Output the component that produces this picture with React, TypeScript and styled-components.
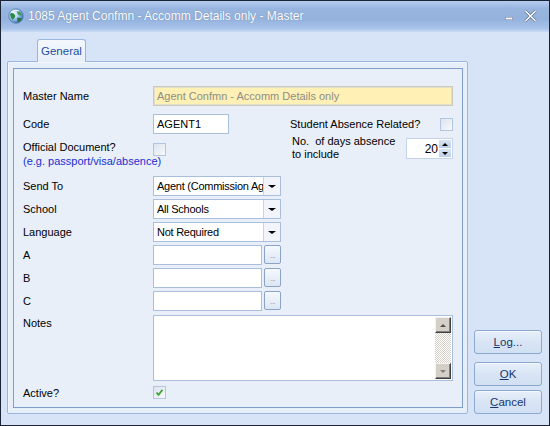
import styled, { createGlobalStyle } from "styled-components";

const GlobalStyle = createGlobalStyle`
  html, body {
    margin: 0;
    padding: 0;
    background: #ffffff;
  }
  body {
    font-family: "Liberation Sans", Arial, sans-serif;
    font-size: 11px;
    color: #000;
  }
`;

const Window = styled.div`
  width: 550px;
  height: 426px;
  box-sizing: border-box;
  border: 1px solid #1b2435;
  display: flex;
  flex-direction: column;
  background: #d7e4f7;
  overflow: hidden;
`;

const TitleBar = styled.div`
  height: 30px;
  flex-shrink: 0;
  display: flex;
  align-items: center;
  padding: 0 8px 0 7px;
  background: linear-gradient(
    #b6cdee 0%,
    #98b5df 25%,
    #94b2dd 60%,
    #a6c2ea 90%,
    #bcd2f0 100%
  );
  border-bottom: 1px solid #c6d8f1;
`;

const TitleText = styled.span`
  margin-left: 4px;
  font-size: 12px;
  color: #ffffff;
  text-shadow: 0 0 1px rgba(50, 80, 130, 0.6);
  flex: 1;
  white-space: nowrap;
`;

const TitleButtons = styled.div`
  display: flex;
  align-items: center;
  gap: 10px;
  margin-right: 4px;
`;

const Body = styled.div`
  flex: 1;
  display: flex;
  padding: 0 7px 11px 6px;
  gap: 6px;
`;

const TabArea = styled.div`
  display: flex;
  flex-direction: column;
  width: 461px;
`;

const TabStrip = styled.div`
  display: flex;
  padding: 7px 0 0 30px;
  height: 23px;
  position: relative;
  z-index: 1;
`;

const Tab = styled.div`
  height: 23px;
  box-sizing: border-box;
  padding: 0 3px;
  display: flex;
  align-items: center;
  border: 1px solid #9ab6dc;
  border-bottom: none;
  border-radius: 3px 3px 0 0;
  background: linear-gradient(#f4f8fd, #e6eef9);
  color: #1f4f9f;
  font-size: 11.5px;
`;

const TabPanel = styled.div`
  flex: 1;
  margin-top: -1px;
  border: 1px solid #9ab6dc;
  border-radius: 2px;
  background: #e6eef9;
  box-shadow: inset 1px 1px 0 #f3f7fd;
  padding: 6px 4px 5px 5px;
  display: flex;
`;

const GroupBox = styled.div`
  flex: 1;
  border: 1px solid #7e9dc8;
  background: #e8eff9;
  padding: 17px 9px 0 9px;
  display: flex;
  flex-direction: column;
`;

const Row = styled.div<{ $h: number; $mt?: number; $top?: boolean }>`
  display: flex;
  align-items: ${(p) => (p.$top ? "flex-start" : "center")};
  height: ${(p) => p.$h}px;
  margin-top: ${(p) => p.$mt ?? 0}px;
  flex-shrink: 0;
`;

const Label = styled.div<{ $pt?: number }>`
  width: 130px;
  flex-shrink: 0;
  line-height: 14px;
  padding-top: ${(p) => p.$pt ?? 0}px;
  white-space: nowrap;
`;

const Hint = styled.div`
  color: #1b2ed0;
  line-height: 14px;
`;

const TextBox = styled.div<{ $w?: number; $tinted?: boolean }>`
  box-sizing: border-box;
  height: 20px;
  width: ${(p) => (p.$w ? `${p.$w}px` : "auto")};
  flex: ${(p) => (p.$w ? "none" : 1)};
  border: 1px solid ${(p) => (p.$tinted ? "#c9c9c0" : "#a9bfdc")};
  background: ${(p) => (p.$tinted ? "#fff0b5" : "#ffffff")};
  color: ${(p) => (p.$tinted ? "#8d8e86" : "#000")};
  display: flex;
  align-items: center;
  padding: 0 3px;
  white-space: nowrap;
  overflow: hidden;
  ${(p) => p.$tinted && "box-shadow: inset 0 0 0 1px #e4dfc8;"}
`;

const Select = styled.div`
  box-sizing: border-box;
  width: 128px;
  height: 20px;
  border: 1px solid #a9bfdc;
  background: #fff;
  display: flex;
  align-items: stretch;
`;

const SelectValue = styled.div`
  flex: 1;
  padding: 0 1px 0 3px;
  display: flex;
  align-items: center;
  white-space: nowrap;
  overflow: hidden;
  letter-spacing: -0.25px;
`;

const SelectArrow = styled.div`
  width: 16px;
  border-left: 1px solid #c3d3e8;
  background: #f1f5fb;
  display: flex;
  align-items: center;
  justify-content: center;
`;

const Triangle = styled.div<{ $up?: boolean; $color?: string; $size?: number }>`
  width: 0;
  height: 0;
  border-left: ${(p) => p.$size ?? 4}px solid transparent;
  border-right: ${(p) => p.$size ?? 4}px solid transparent;
  ${(p) =>
    p.$up
      ? `border-bottom: ${(p.$size ?? 4) - 0.5}px solid ${p.$color ?? "#000"};`
      : `border-top: ${(p.$size ?? 4) - 0.5}px solid ${p.$color ?? "#000"};`}
`;

const LookupRow = styled.div`
  display: flex;
  gap: 2px;
  width: 128px;
`;

const DotsButton = styled.div`
  box-sizing: border-box;
  width: 17px;
  height: 19px;
  border: 1px solid #8aa3c6;
  border-radius: 2px;
  background: linear-gradient(#f6f9fd, #dce6f3);
  color: #7b93b5;
  font-size: 8px;
  display: flex;
  align-items: center;
  justify-content: center;
  padding-top: 2px;
  letter-spacing: -0.5px;
`;

const CheckBox = styled.div<{ $mt?: number }>`
  box-sizing: border-box;
  width: 13px;
  height: 13px;
  margin-top: ${(p) => p.$mt ?? 0}px;
  border: 1px solid #b4c6de;
  background: linear-gradient(135deg, #dce4ef, #f7f9fc);
  display: flex;
  align-items: center;
  justify-content: center;
  flex-shrink: 0;
`;

const RightGroup = styled.div<{ $mt?: number }>`
  margin-left: auto;
  width: 163px;
  display: flex;
  justify-content: space-between;
  align-items: ${(p) => (p.$mt ? "flex-start" : "center")};
  margin-top: ${(p) => p.$mt ?? 0}px;
`;

const RightText = styled.div<{ $pl?: number }>`
  line-height: 12.5px;
  padding-left: ${(p) => p.$pl ?? 0}px;
  white-space: nowrap;
`;

const Spinner = styled.div`
  box-sizing: border-box;
  width: 47px;
  height: 21px;
  margin-top: 3px;
  border: 1px solid #c4d3e7;
  background: #fff;
  display: flex;
  align-items: stretch;
`;

const SpinValue = styled.div`
  flex: 1;
  display: flex;
  align-items: center;
  justify-content: flex-end;
  font-size: 12px;
  padding-right: 1px;
`;

const SpinButtons = styled.div`
  width: 12px;
  display: flex;
  flex-direction: column;
  gap: 1px;
  padding: 1px 1px 1px 0;
`;

const SpinHalf = styled.div`
  flex: 1;
  background: linear-gradient(#d8e4f3, #bccfe8);
  display: flex;
  align-items: center;
  justify-content: center;
`;

const NotesBox = styled.div`
  box-sizing: border-box;
  flex: 1;
  height: 66px;
  border: 1px solid #a9bfdc;
  background: #fff;
  display: flex;
  justify-content: flex-end;
  padding: 1px;
`;

const ScrollBar = styled.div`
  width: 16px;
  display: flex;
  flex-direction: column;
  background: repeating-conic-gradient(#ffffff 0 25%, #d4d0c8 0 50%) 0 0 / 2px 2px;
`;

const ScrollButton = styled.div`
  box-sizing: border-box;
  height: 16px;
  background: #d4d0c8;
  border-top: 1px solid #f4f3ef;
  border-left: 1px solid #f4f3ef;
  border-right: 1px solid #404040;
  border-bottom: 1px solid #404040;
  box-shadow: inset -1px -1px 0 #808080;
  display: flex;
  align-items: center;
  justify-content: center;
`;

const ScrollTrack = styled.div`
  flex: 1;
`;

const ButtonColumn = styled.div`
  width: 68px;
  display: flex;
  flex-direction: column;
  justify-content: flex-end;
`;

const DialogButton = styled.div<{ $mt?: number }>`
  box-sizing: border-box;
  height: 24px;
  margin-top: ${(p) => p.$mt ?? 0}px;
  border: 1px solid #8ea9ce;
  border-radius: 3px;
  background: linear-gradient(#e7effa, #d9e5f5 50%, #d1dff3);
  box-shadow: inset 0 1px 0 #f5f8fd;
  color: #16366b;
  font-size: 11.5px;
  display: flex;
  align-items: center;
  justify-content: center;
`;

const Mnemonic = styled.span`
  text-decoration: underline;
`;

const GlobeIcon = () => (
  <svg width="16" height="16" viewBox="0 0 16 16">
    <defs>
      <radialGradient id="g" cx="0.35" cy="0.35" r="0.75">
        <stop offset="0" stopColor="#ffffff" />
        <stop offset="0.5" stopColor="#9cc3ec" />
        <stop offset="1" stopColor="#2a64b0" />
      </radialGradient>
    </defs>
    <circle cx="8" cy="8" r="7.2" fill="url(#g)" stroke="#3a6aa8" strokeWidth="0.6" />
    <path d="M2 6 C4 4 6 5 7 7 C8 9 6 10 5 12 C3.5 11 2.3 9 2 6Z" fill="#2d8a4a" />
    <path d="M9 3 C11 3 13 5 14 7 C12 8 10 7 9.5 5.5Z" fill="#3e9a52" />
    <path d="M9 10 C11 9.5 13 10 13.5 11 C12.5 13 11 14 9.5 14.5 C9.8 13 9.5 11.5 9 10Z" fill="#2b6f3d" />
    <path d="M3 4 C5 2.5 9 2 11 3" stroke="#ffffff" strokeWidth="1" fill="none" opacity="0.8" />
  </svg>
);

const MinimizeIcon = () => (
  <svg width="10" height="10" viewBox="0 0 10 10">
    <rect x="1" y="6" width="8" height="3" fill="#5e6f8a" />
    <rect x="1.5" y="6.5" width="7" height="2" fill="#ffffff" />
  </svg>
);

const CloseIcon = () => (
  <svg width="13" height="12" viewBox="0 0 13 12">
    <path d="M1.5 1 L11.5 11 M11.5 1 L1.5 11" stroke="#6a7a92" strokeWidth="3" />
    <path d="M1.5 1 L11.5 11 M11.5 1 L1.5 11" stroke="#ffffff" strokeWidth="1.4" />
  </svg>
);

const CheckMark = () => (
  <svg width="9" height="9" viewBox="0 0 9 9">
    <path d="M1.5 4.5 L3.5 6.8 L7.5 1.8" stroke="#3aa32e" strokeWidth="1.8" fill="none" />
  </svg>
);

const Dropdown = ({ value }: { value: string }) => (
  <Select>
    <SelectValue>{value}</SelectValue>
    <SelectArrow>
      <Triangle />
    </SelectArrow>
  </Select>
);

const Lookup = () => (
  <LookupRow>
    <TextBox $w={109} />
    <DotsButton>...</DotsButton>
  </LookupRow>
);

export default function App() {
  return (
    <>
      <GlobalStyle />
      <Window>
        <TitleBar>
          <GlobeIcon />
          <TitleText>1085 Agent Confmn - Accomm Details only - Master</TitleText>
          <TitleButtons>
            <MinimizeIcon />
            <CloseIcon />
          </TitleButtons>
        </TitleBar>
        <Body>
          <TabArea>
            <TabStrip>
              <Tab>General</Tab>
            </TabStrip>
            <TabPanel>
              <GroupBox>
                <Row $h={20}>
                  <Label>Master Name</Label>
                  <TextBox $tinted>Agent Confmn - Accomm Details only</TextBox>
                </Row>
                <Row $h={20} $mt={8}>
                  <Label>Code</Label>
                  <TextBox $w={76}>AGENT1</TextBox>
                  <RightGroup>
                    <RightText>Student Absence Related?</RightText>
                    <CheckBox />
                  </RightGroup>
                </Row>
                <Row $h={32} $mt={4} $top>
                  <Label $pt={2}>
                    Official Document?
                    <Hint>(e.g. passport/visa/absence)</Hint>
                  </Label>
                  <CheckBox $mt={5} />
                  <RightGroup $mt={-3}>
                    <RightText $pl={2}>
                      No.&nbsp; of days absence
                      <br />
                      to include
                    </RightText>
                    <Spinner>
                      <SpinValue>20</SpinValue>
                      <SpinButtons>
                        <SpinHalf>
                          <Triangle $up $size={3.5} />
                        </SpinHalf>
                        <SpinHalf>
                          <Triangle $size={3.5} />
                        </SpinHalf>
                      </SpinButtons>
                    </Spinner>
                  </RightGroup>
                </Row>
                <Row $h={20} $mt={6}>
                  <Label>Send To</Label>
                  <Dropdown value="Agent (Commission Ag" />
                </Row>
                <Row $h={20} $mt={3}>
                  <Label>School</Label>
                  <Dropdown value="All Schools" />
                </Row>
                <Row $h={20} $mt={3}>
                  <Label>Language</Label>
                  <Dropdown value="Not Required" />
                </Row>
                <Row $h={20} $mt={3}>
                  <Label>A</Label>
                  <Lookup />
                </Row>
                <Row $h={20} $mt={3}>
                  <Label>B</Label>
                  <Lookup />
                </Row>
                <Row $h={20} $mt={3}>
                  <Label>C</Label>
                  <Lookup />
                </Row>
                <Row $h={66} $mt={4} $top>
                  <Label $pt={1}>Notes</Label>
                  <NotesBox>
                    <ScrollBar>
                      <ScrollButton>
                        <Triangle $up $size={3.5} $color="#505050" />
                      </ScrollButton>
                      <ScrollTrack />
                      <ScrollButton>
                        <Triangle $size={3.5} $color="#808080" />
                      </ScrollButton>
                    </ScrollBar>
                  </NotesBox>
                </Row>
                <Row $h={13} $mt={5}>
                  <Label>Active?</Label>
                  <CheckBox>
                    <CheckMark />
                  </CheckBox>
                </Row>
              </GroupBox>
            </TabPanel>
          </TabArea>
          <ButtonColumn>
            <DialogButton>
              <span>
                <Mnemonic>L</Mnemonic>og...
              </span>
            </DialogButton>
            <DialogButton $mt={8}>
              <span>
                <Mnemonic>O</Mnemonic>K
              </span>
            </DialogButton>
            <DialogButton $mt={4}>
              <span>
                <Mnemonic>C</Mnemonic>ancel
              </span>
            </DialogButton>
          </ButtonColumn>
        </Body>
      </Window>
    </>
  );
}
